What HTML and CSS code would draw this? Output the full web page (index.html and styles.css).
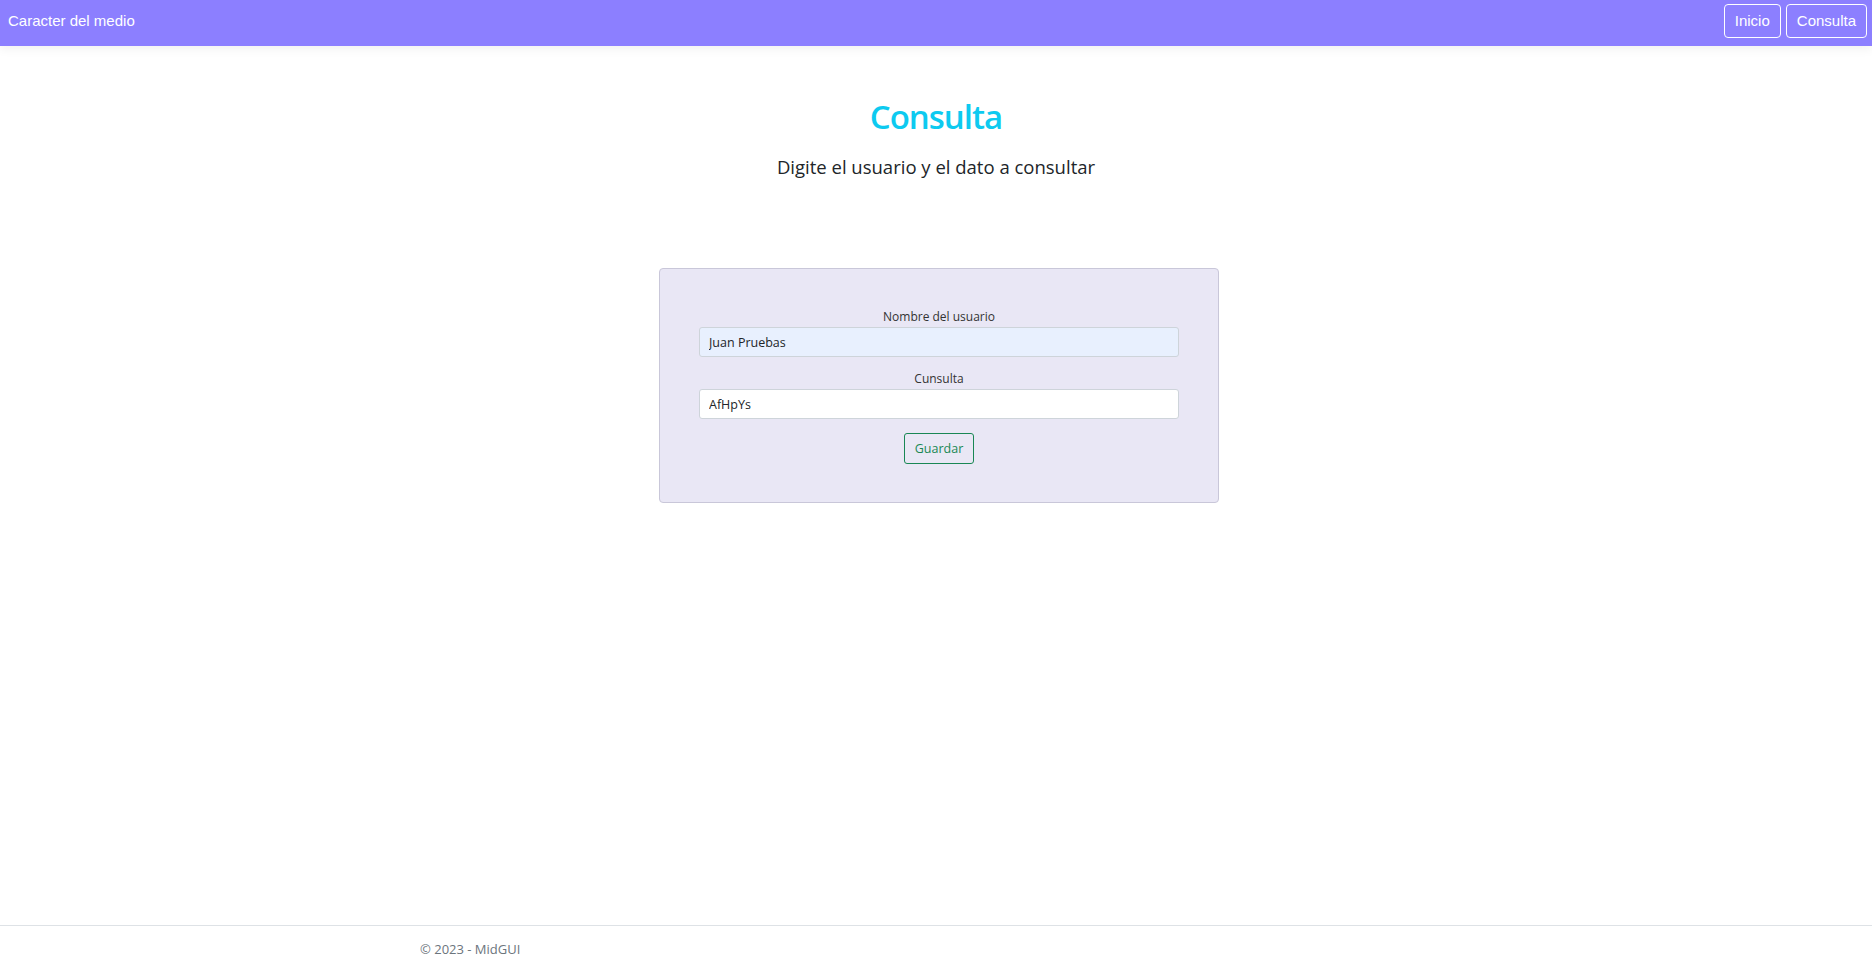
FILE: index.html
```html
<!DOCTYPE html>
<html lang="es">
<head>
<meta charset="utf-8">
<title>Consulta - MidGUI</title>
<link rel="stylesheet" href="styles.css">
</head>
<body>
<header class="navbar">
  <a class="brand" href="#">Caracter del medio</a>
  <nav class="nav-links">
    <a class="nav-btn" href="#">Inicio</a>
    <a class="nav-btn" href="#">Consulta</a>
  </nav>
</header>
<main class="main">
  <h1 class="title">Consulta</h1>
  <h5 class="subtitle">Digite el usuario y el dato a consultar</h5>
  <form class="card">
    <label class="field-label" for="usuario">Nombre del usuario</label>
    <input class="field-input autofilled" id="usuario" type="text" value="Juan Pruebas">
    <label class="field-label" for="consulta">Cunsulta</label>
    <input class="field-input" id="consulta" type="text" value="AfHpYs">
    <button class="btn-save" type="button">Guardar</button>
  </form>
</main>
<footer class="footer">
  <div class="footer-inner">© 2023 - MidGUI</div>
</footer>
</body>
</html>
```

FILE: styles.css
```css
* { box-sizing: border-box; }
html, body { margin: 0; padding: 0; }
body {
  font-family: "Open Sans", "Noto Sans", sans-serif;
  color: #212529;
  background: #fff;
  min-height: 967px;
  display: flex;
  flex-direction: column;
}
.navbar {
  height: 46px;
  background: #8c7fff;
  display: flex;
  align-items: flex-start;
  justify-content: space-between;
  padding: 4px 5px 0 8px;
  box-shadow: 0 3px 10px rgba(0,0,0,0.06);
  font-family: "Liberation Sans", Arial, sans-serif;
  font-size: 15px;
}
.brand {
  color: #fff;
  text-decoration: none;
  line-height: 34px;
}
.nav-links { display: flex; gap: 5px; }
.nav-btn {
  color: #fff;
  text-decoration: none;
  border: 1px solid #fff;
  border-radius: 4px;
  height: 34px;
  line-height: 32px;
  padding: 0 10px;
}
.main {
  flex: 1;
  display: flex;
  flex-direction: column;
  align-items: center;
}
.title {
  margin: 50px 0 0;
  font-size: 33px;
  font-weight: 600;
  line-height: 42px;
  letter-spacing: -1px;
  color: #0dcaf0;
}
.subtitle {
  margin: 17px 0 0;
  font-size: 18.5px;
  font-weight: 500;
  line-height: 24px;
  color: #212529;
}
.card {
  margin: 89px 0 0 6px;
  width: 560px;
  height: 235px;
  background: #e9e7f5;
  border: 1px solid #c9c7d9;
  border-radius: 4px;
  padding: 38px 39px 0;
  display: flex;
  flex-direction: column;
  align-items: center;
}
.field-label {
  font-size: 12px;
  line-height: 20px;
  color: #333;
}
.field-input {
  width: 100%;
  height: 30px;
  border: 1px solid #ced4da;
  border-radius: 3px;
  background: #fff;
  padding: 0 9px;
  font-family: "Open Sans", "Noto Sans", sans-serif;
  font-size: 12.5px;
  color: #212529;
  margin-bottom: 12px;
}
.field-input.autofilled { background: #e8f0fe; }
.btn-save {
  margin-top: 2px;
  height: 31px;
  padding: 0 10px;
  border: 1px solid #198754;
  border-radius: 3px;
  background: transparent;
  color: #198754;
  font-family: "Open Sans", "Noto Sans", sans-serif;
  font-size: 12.5px;
}
.footer {
  height: 42px;
  border-top: 1px solid #dee2e6;
  color: #6c757d;
  font-size: 13px;
  line-height: 20px;
  padding: 13px 0 0 420px;
}
```
